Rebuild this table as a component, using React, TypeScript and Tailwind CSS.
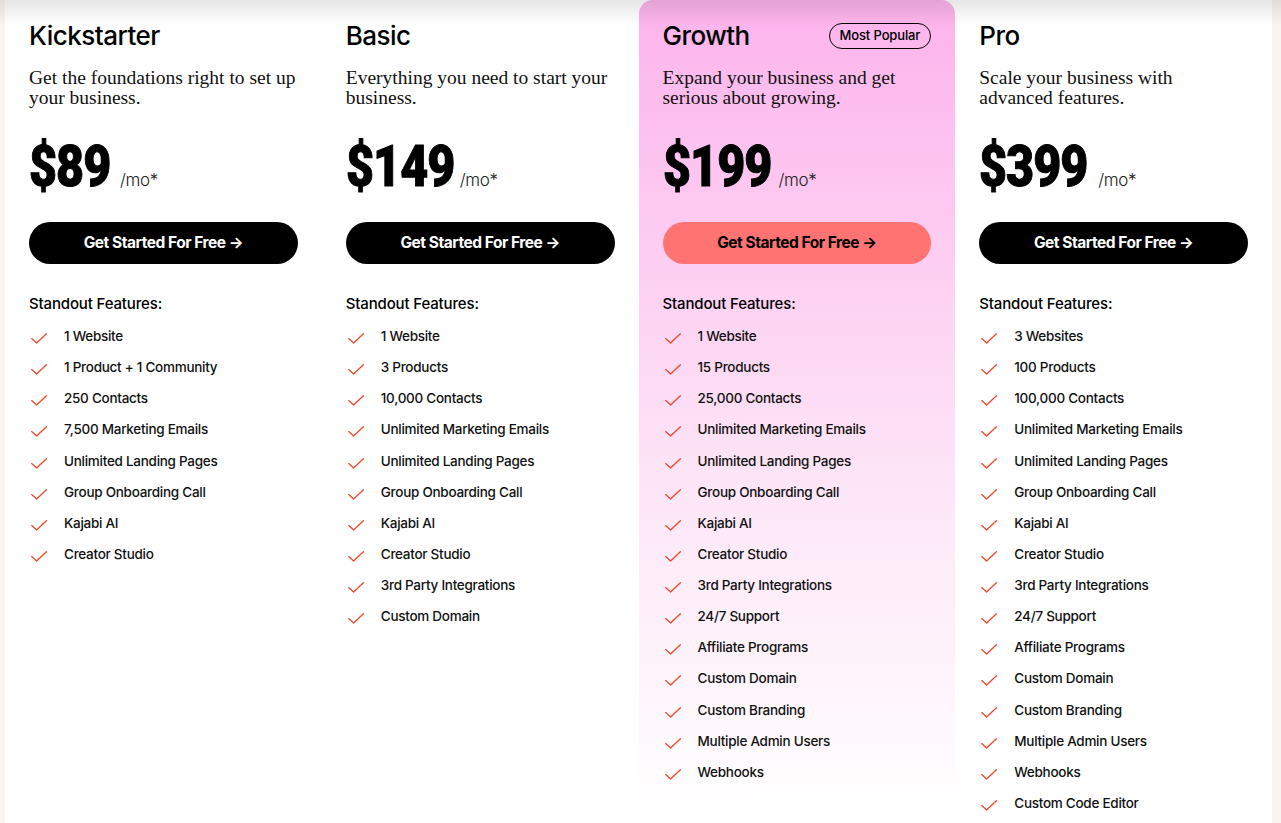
import React from 'react';

type Plan = {
  name: string;
  blurb: string;
  price: string;
  priceW: string;
  features: string[];
  popular?: boolean;
};

const plans: Plan[] = [
  {
    name: 'Kickstarter',
    blurb: 'Get the foundations right to set up your business.',
    price: '$89',
    priceW: 'w-[83px]',
    features: [
      '1 Website',
      '1 Product + 1 Community',
      '250 Contacts',
      '7,500 Marketing Emails',
      'Unlimited Landing Pages',
      'Group Onboarding Call',
      'Kajabi AI',
      'Creator Studio',
    ],
  },
  {
    name: 'Basic',
    blurb: 'Everything you need to start your business.',
    price: '$149',
    priceW: 'w-[106px]',
    features: [
      '1 Website',
      '3 Products',
      '10,000 Contacts',
      'Unlimited Marketing Emails',
      'Unlimited Landing Pages',
      'Group Onboarding Call',
      'Kajabi AI',
      'Creator Studio',
      '3rd Party Integrations',
      'Custom Domain',
    ],
  },
  {
    name: 'Growth',
    blurb: 'Expand your business and get serious about growing.',
    price: '$199',
    priceW: 'w-[108px]',
    popular: true,
    features: [
      '1 Website',
      '15 Products',
      '25,000 Contacts',
      'Unlimited Marketing Emails',
      'Unlimited Landing Pages',
      'Group Onboarding Call',
      'Kajabi AI',
      'Creator Studio',
      '3rd Party Integrations',
      '24/7 Support',
      'Affiliate Programs',
      'Custom Domain',
      'Custom Branding',
      'Multiple Admin Users',
      'Webhooks',
    ],
  },
  {
    name: 'Pro',
    blurb: 'Scale your business with advanced features.',
    price: '$399',
    priceW: 'w-[111px]',
    features: [
      '3 Websites',
      '100 Products',
      '100,000 Contacts',
      'Unlimited Marketing Emails',
      'Unlimited Landing Pages',
      'Group Onboarding Call',
      'Kajabi AI',
      'Creator Studio',
      '3rd Party Integrations',
      '24/7 Support',
      'Affiliate Programs',
      'Custom Domain',
      'Custom Branding',
      'Multiple Admin Users',
      'Webhooks',
      'Custom Code Editor',
    ],
  },
];

function Check() {
  return (
    <svg width="16" height="11" viewBox="0 0 16 11" fill="none" className="shrink-0 mt-[6px] ml-[2px]">
      <path d="M0.7 5.6 L5.6 10 L15.4 0.8" stroke="#f2472a" strokeWidth="1.3" strokeLinecap="round" strokeLinejoin="round" />
    </svg>
  );
}

function PlanCard({ plan }: { plan: Plan }) {
  return (
    <div
      className={
        plan.popular
          ? 'self-start rounded-[14px] bg-linear-to-b from-[#fcb3ec] via-[#fde6f7] via-60% to-white px-6 pt-[20px] pb-[22px]'
          : 'px-6 pt-[20px] pb-6'
      }
    >
      <div className="flex items-center justify-between h-8">
        <h2 className="text-[26px] leading-8 font-medium tracking-[-0.02em] text-black">{plan.name}</h2>
        {plan.popular && (
          <span className="rounded-full border-[1.5px] border-black px-[10px] h-[26px] flex items-center text-[13px] font-medium tracking-[-0.01em] text-black">
            Most Popular
          </span>
        )}
      </div>

      <p className="mt-[16px] text-[19.5px] leading-5 text-[#111] font-['Liberation_Serif',serif]">{plan.blurb}</p>

      <div className="mt-[29px] flex items-baseline h-[60px]">
        <div className={plan.priceW + ' shrink-0'}>
          <span className="inline-block origin-left scale-x-[0.85] whitespace-nowrap text-[57px] leading-[60px] font-black tracking-[-0.02em] text-black font-['Roboto',sans-serif] [-webkit-text-stroke:1px_black]">
            {plan.price}
          </span>
        </div>
        <span className="ml-[8px] text-[17px] font-light text-[#222] tracking-[-0.02em]">/mo*</span>
      </div>

      <button
        className={
          (plan.popular ? 'bg-[#ff7373] text-black' : 'bg-black text-white') +
          ' mt-[25px] w-full h-[42px] rounded-full text-[15.5px] font-bold tracking-[-0.03em]'
        }
      >
        Get Started For Free →
      </button>

      <h3 className="mt-[30px] text-[15px] leading-5 font-medium tracking-[-0.01em] text-black">Standout Features:</h3>

      <ul className="mt-[13px]">
        {plan.features.map((f) => (
          <li key={f} className="flex h-[31.13px] items-start">
            <Check />
            <span className="ml-[17px] text-[13.5px] leading-[18px] font-medium tracking-[-0.02em] text-[#111]">{f}</span>
          </li>
        ))}
      </ul>
    </div>
  );
}

export default function App() {
  return (
    <div className="relative min-h-[823px] bg-[#f8f5f0] pl-[5px] pr-[9px] font-['Inter',sans-serif]">
      <div className="grid grid-cols-4 bg-white min-h-[823px]">
        {plans.map((p) => (
          <PlanCard key={p.name} plan={p} />
        ))}
      </div>
      <div className="pointer-events-none absolute inset-x-0 top-0 h-[26px] bg-linear-to-b from-black/10 to-transparent" />
    </div>
  );
}
